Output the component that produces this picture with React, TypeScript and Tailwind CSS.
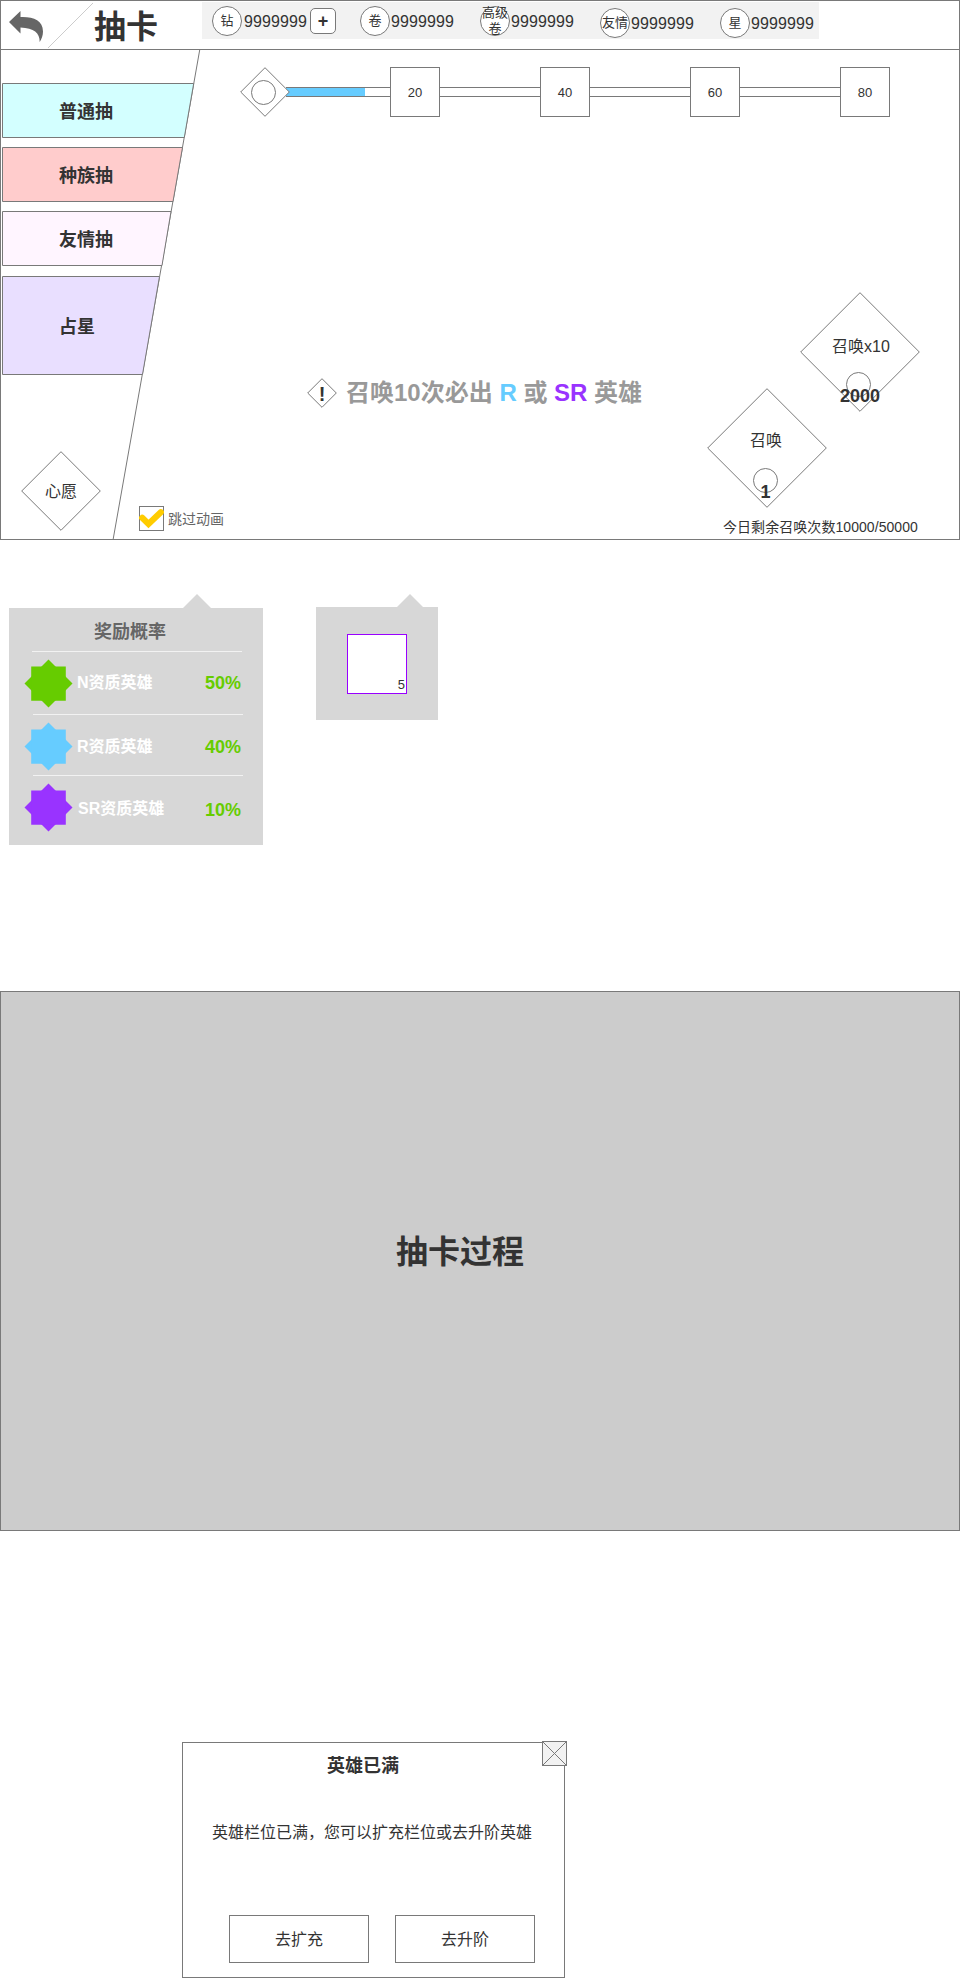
import React from "react";

const INK = "text-[#333333]";

function Diamond({ size, className = "", children }: { size: number; className?: string; children?: React.ReactNode }) {
  const h = size / 2;
  return (
    <div className={`relative shrink-0 ${className}`} style={{ width: size, height: size }}>
      <svg className="absolute inset-0" width={size} height={size} viewBox={`0 0 ${size} ${size}`}>
        <path d={`M${h} .7L${size - 0.7} ${h}L${h} ${size - 0.7}L.7 ${h}Z`} fill="#fff" stroke="#797979" />
      </svg>
      {children}
    </div>
  );
}

function Currency({ label, low = false, className = "", gap = "ml-px" }: { label: string; low?: boolean; className?: string; gap?: string }) {
  return (
    <div className={`flex h-[30px] items-center ${low ? "mt-1.5" : "mt-1"} ${className}`}>
      <div className="flex size-[30px] shrink-0 items-center justify-center rounded-full border border-[#797979] bg-white">
        <span className="w-[26px] shrink-0 text-center text-[13px] leading-4">{label}</span>
      </div>
      <span className={`${gap} pt-0.5 text-base leading-[18px] tracking-[0.1px]`}>9999999</span>
    </div>
  );
}

function Tab({ label, top, bottom, height, fill, className, pad }: { label: string; top: number; bottom: number; height: number; fill: string; className: string; pad: string }) {
  return (
    <div className={`relative flex items-center ${className}`}>
      <svg className="absolute inset-0" width="200" height={height}>
        <path d={`M.5 .5H${top}L${bottom} ${height - 0.5}H.5Z`} fill={fill} stroke="#797979" />
      </svg>
      <span className={`relative pt-0.5 text-lg font-bold ${pad}`}>{label}</span>
    </div>
  );
}

function Milestone({ value }: { value: number }) {
  return (
    <>
      <div className="flex size-[50px] items-center justify-center border border-[#797979] bg-white pt-px text-[13px]">{value}</div>
      {value < 80 && <div className="h-2.5 w-[100px] border-y border-[#797979]" />}
    </>
  );
}

function Star({ color }: { color: string }) {
  return (
    <svg width="49" height="49" viewBox="-24.5 -24.5 49 49" className="shrink-0">
      <path d="M0-24L24 0L0 24L-24 0Z" fill={color} />
      <path d="M-17.3-17H17.3V17.3H-17.3Z" fill={color} />
    </svg>
  );
}

function Odds({ color, name, pct, className, nameClass, pctClass }: { color: string; name: string; pct: string; className: string; nameClass: string; pctClass: string }) {
  return (
    <div className={`flex h-[49px] items-center ${className}`}>
      <Star color={color} />
      <span className={`text-base font-bold text-white ${nameClass}`}>{name}</span>
      <span className={`mr-[22px] ml-auto text-lg font-bold text-[#66cc00] ${pctClass}`}>{pct}</span>
    </div>
  );
}

function Header() {
  return (
    <header className="flex h-[49px] border-b border-[#797979]">
      <svg width="92" height="48" viewBox="1 1 92 48" className="shrink-0">
        <path d="M9 22L20.5 11V17C33 16.5 43 20 43 31.5C43 35.5 41.5 39 39.7 42C39.8 33 34 28 20.5 27.5V33.5Z" fill="#666666" />
        <path d="M48 48L93 3" stroke="#cccccc" />
      </svg>
      <h1 className="w-[109px] shrink-0 pt-0.5 pl-px text-[32px] leading-[48px] font-bold"><span>抽卡</span></h1>
      <div className="mt-px flex h-[37px] w-[617px] bg-[#f2f2f2] pl-2.5">
        <div className="flex w-[148px]">
          <Currency label="钻" gap="ml-0.5" />
          <div className="mt-1.5 ml-[3px] flex size-[26px] shrink-0 items-center justify-center rounded-[5px] border border-[#797979] bg-white text-lg font-bold">+</div>
        </div>
        <Currency label="卷" className="w-[120px]" />
        <Currency label="高级卷" className="w-[120px]" />
        <Currency label="友情" low className="w-[120px]" />
        <Currency label="星" low />
      </div>
    </header>
  );
}

function Summon({ label, cost, className, labelClass, costClass }: { label: string; cost: string; className: string; labelClass: string; costClass: string }) {
  return (
    <Diamond size={120} className={className}>
      <div className="relative flex flex-col items-center pt-[42px]">
        <span className={`relative text-base leading-6 ${labelClass}`}>{label}</span>
        <div className="mt-3.5 mr-[3px] size-[25px] rounded-full border border-[#797979]" />
        <strong className={`-mt-3 text-lg leading-[22px] ${costClass}`}>{cost}</strong>
      </div>
    </Diamond>
  );
}

function DrawScreen() {
  return (
    <section className="relative h-[540px] border border-[#797979] bg-white">
      <Header />
      <svg className="absolute top-[49px] left-0" width="210" height="489">
        <path d="M198.7 0L112.2 489" stroke="#797979" fill="none" />
      </svg>
      <div className="flex h-[489px]">
        <nav className="flex w-[199px] shrink-0 flex-col pt-[33px] pl-px">
          <Tab label="普通抽" top={191.7} bottom={182.3} height={55} fill="#d3ffff" className="h-[55px]" pad="pl-[57px]" />
          <Tab label="种族抽" top={180.5} bottom={171} height={55} fill="#ffcccc" className="mt-[9px] h-[55px]" pad="pl-[57px]" />
          <Tab label="友情抽" top={169} bottom={160} height={55} fill="#fff5ff" className="mt-[9px] h-[55px]" pad="pl-[57px]" />
          <Tab label="占星" top={157.5} bottom={140.5} height={99} fill="#e9dfff" className="mt-2.5 h-[99px]" pad="pl-[57px]" />
          <Diamond size={80} className="mt-[76px] ml-[19px]">
            <span className="relative flex h-full items-center justify-center pt-0.5 text-base">心愿</span>
          </Diamond>
        </nav>
        <main className="flex flex-1 flex-col">
          <div className="mt-[17px] ml-10 flex items-center">
            <Diamond size={50} className="z-10">
              <div className="relative ml-[11px] size-[25px] translate-y-[13px] rounded-full border border-[#797979]" />
            </Diamond>
            <div className="-ml-1 h-2.5 w-[104px] border-y border-[#797979]">
              <div className="h-2 w-[79px] bg-[#66ccff]" />
            </div>
            {[20, 40, 60, 80].map((v) => (
              <Milestone key={v} value={v} />
            ))}
          </div>
          <div className="flex h-[422px]">
            <div className="flex w-[507px] shrink-0 flex-col">
              <div className="mt-[260px] ml-[107px] flex items-center">
                <Diamond size={30}>
                  <span className="relative flex h-full items-center justify-center pt-0.5 text-xl font-bold">!</span>
                </Diamond>
                <p className="ml-[9px] pt-px text-2xl leading-[30px] font-bold whitespace-nowrap text-[#999999]">
                  召唤10次必出 <span className="text-[#66ccff]">R</span> 或 <span className="text-[#9933ff]">SR</span> 英雄
                </p>
              </div>
              <label className="mt-auto mb-2 -ml-[61px] flex items-center">
                <span className="flex size-[25px] items-center justify-center border border-[#797979]">
                  <svg width="25" height="25" viewBox="0 0 25 25" className="shrink-0">
                    <path d="M3.2 11.8L9.5 18L21.8 6.2" fill="none" stroke="#ffcc00" strokeWidth="6.2" strokeLinecap="round" />
                  </svg>
                </span>
                <span className="ml-1 text-sm text-[#666666]">跳过动画</span>
              </label>
            </div>
            <div className="flex flex-1 flex-col">
              <Summon label="召唤x10" cost="2000" className="mt-[175px] ml-[93px]" labelClass="translate-x-px translate-y-px" costClass="" />
              <Summon label="召唤" cost="1" className="-mt-6" labelClass="-translate-x-px -translate-y-px" costClass="mr-[3px]" />
              <p className="mt-[9px] ml-4 text-sm leading-5 tracking-[0.06px] whitespace-nowrap">今日剩余召唤次数10000/50000</p>
            </div>
          </div>
        </main>
      </div>
    </section>
  );
}

function Caret({ className }: { className: string }) {
  return (
    <svg width="28" height="14" className={className}>
      <path d="M14 0L28 14H0Z" fill="#d7d7d7" />
    </svg>
  );
}

export default function App() {
  return (
    <div className={`flex h-[1978px] w-[960px] flex-col bg-white font-['Liberation_Sans','Noto_Sans_CJK_SC',sans-serif] ${INK}`}>
      <DrawScreen />
      <div className="mt-[54px] flex h-[251px] items-start pl-[9px]">
        <div>
          <Caret className="ml-[174px] block" />
          <section className="flex h-[237px] w-[254px] flex-col bg-[#d7d7d7]">
            <h2 className="mt-[11px] ml-[85px] text-lg leading-[26px] font-bold text-[#666666]">奖励概率</h2>
            <div className="mt-1.5 ml-[23px] h-px w-[210px] shrink-0 bg-[#f2f2f2]" />
            <Odds color="#66cc00" name="N资质英雄" pct="50%" className="mt-[7px] ml-[15px]" nameClass="ml-1 pb-0.5" pctClass="pb-0.5" />
            <div className="mt-1.5 ml-6 h-px w-[210px] shrink-0 bg-[#f2f2f2]" />
            <Odds color="#66ccff" name="R资质英雄" pct="40%" className="mt-[7px] ml-[15px]" nameClass="ml-1" pctClass="" />
            <div className="mt-1 ml-6 h-px w-[210px] shrink-0 bg-[#f2f2f2]" />
            <Odds color="#9933ff" name="SR资质英雄" pct="10%" className="mt-[7px] ml-[15px]" nameClass="ml-[5px] pt-[3px]" pctClass="pt-1" />
          </section>
        </div>
        <div className="ml-[53px]">
          <Caret className="-mb-px ml-20 block" />
          <section className="h-[113px] w-[122px] bg-[#d7d7d7] pt-[27px] pl-[31px]">
            <div className="flex size-[60px] items-end justify-end border border-[#9900ff] bg-white pr-px pb-px text-[13px] leading-[14px]">5</div>
          </section>
        </div>
      </div>
      <section className="mt-[146px] flex h-[540px] shrink-0 items-center justify-center border border-[#797979] bg-[#cccccc] pr-10 pb-[18px]">
        <h2 className="text-[32px] leading-[48px] font-bold">抽卡过程</h2>
      </section>
      <section className="relative mt-[211px] ml-[182px] flex h-[236px] w-[383px] shrink-0 flex-col border border-[#797979] bg-white">
        <svg className="absolute -top-0.5 -right-[3px]" width="25" height="25">
          <rect x=".5" y=".5" width="24" height="24" fill="#f2f2f2" stroke="#797979" />
          <path d="M.5 .5L24.5 24.5M24.5 .5L.5 24.5" stroke="#797979" />
        </svg>
        <h2 className="mt-2.5 ml-36 text-lg leading-[26px] font-bold">英雄已满</h2>
        <p className="mt-[42px] ml-[29px] text-base leading-6 whitespace-nowrap">英雄栏位已满，您可以扩充栏位或去升阶英雄</p>
        <div className="mt-[70px] ml-[46px] flex gap-[26px]">
          <button className="h-12 w-[140px] border border-[#797979] pt-0.5 text-base">去扩充</button>
          <button className="h-12 w-[140px] border border-[#797979] pt-0.5 text-base">去升阶</button>
        </div>
      </section>
    </div>
  );
}
